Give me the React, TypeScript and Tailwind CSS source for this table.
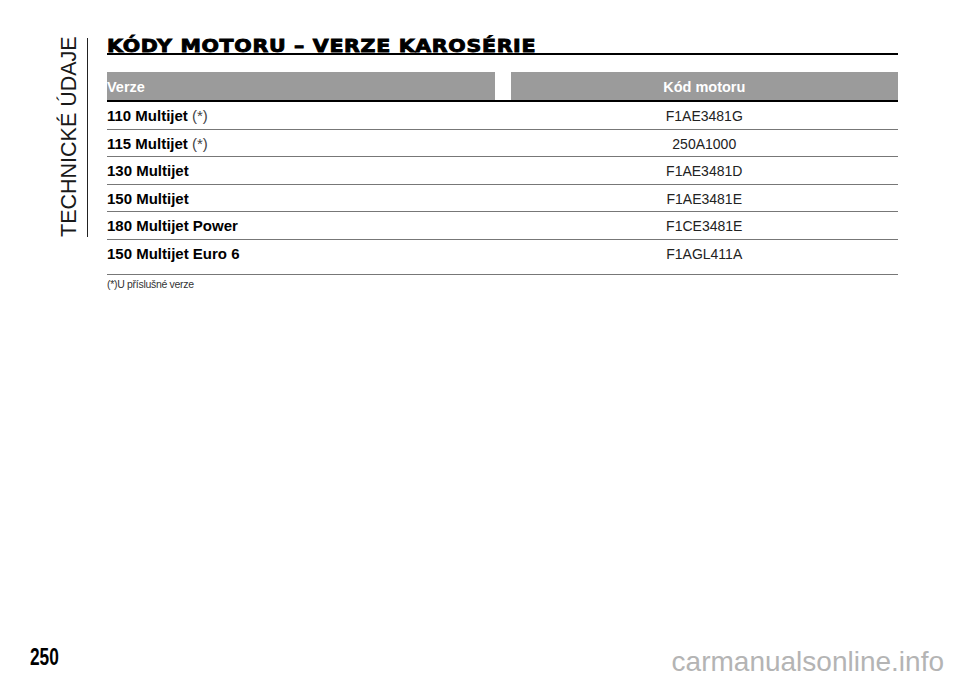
const rows: { name: string; note?: boolean; code: string }[] = [
  { name: "110 Multijet", note: true, code: "F1AE3481G" },
  { name: "115 Multijet", note: true, code: "250A1000" },
  { name: "130 Multijet", code: "F1AE3481D" },
  { name: "150 Multijet", code: "F1AE3481E" },
  { name: "180 Multijet Power", code: "F1CE3481E" },
  { name: "150 Multijet Euro 6", code: "F1AGL411A" },
];

const sans = { fontFamily: '"Liberation Sans", Arial, sans-serif' };

export default function App() {
  return (
    <div
      className="relative w-[960px] h-[686px] bg-white text-black overflow-hidden flex flex-col"
      style={sans}
    >
      <div className="flex pt-[38px] pl-[58px]">
        {/* side tab */}
        <div className="flex items-stretch gap-[7px] h-[199px]">
          <div
            className="text-[21.5px] leading-[22px] text-[#1a1a1a] rotate-180 text-right whitespace-nowrap"
            style={{ writingMode: "vertical-rl" }}
          >
            TECHNICKÉ ÚDAJE
          </div>
          <div className="w-px bg-[#222]" />
        </div>

        {/* main */}
        <div className="ml-[19px] w-[791px]">
          <h1
            className="border-b-2 border-black text-[18px] leading-[15px] font-bold text-black whitespace-nowrap"
            style={{ fontFamily: '"DejaVu Sans", Verdana, sans-serif' }}
          >
            <span className="inline-block origin-left scale-x-[1.14] tracking-[0.6px] [-webkit-text-stroke:0.9px_black]">
              KÓDY MOTORU – VERZE KAROSÉRIE
            </span>
          </h1>

          <div className="mt-[17px]">
            <div className="grid grid-cols-2 gap-x-4 border-b-2 border-black">
              <div className="h-[28px] bg-[#9b9b9b] flex items-center text-white font-bold text-[14.5px] pt-[3px]">
                Verze
              </div>
              <div className="h-[28px] bg-[#9b9b9b] flex items-center justify-center text-white font-bold text-[14.5px] pt-[3px]">
                Kód motoru
              </div>
            </div>

            {rows.map((r, i) => (
              <div
                key={r.code}
                className={`grid grid-cols-2 gap-x-4 border-b border-[#777] items-baseline pt-[5px] ${
                  i === rows.length - 1 ? "h-[35px]" : "h-[27.5px]"
                }`}
              >
                <div className="text-[15px] leading-[17px]">
                  <span className="font-bold">{r.name}</span>
                  {r.note && <span className="text-[#444]"> (*)</span>}
                </div>
                <div className="text-center text-[14px] leading-[17px] text-[#222]">
                  {r.code}
                </div>
              </div>
            ))}

            <p className="mt-[3px] text-[10.5px] leading-[12px] text-[#333] tracking-[-0.3px]">
              (*)U příslušné verze
            </p>
          </div>
        </div>
      </div>

      <div className="mt-auto pl-[30px] pb-[14px]">
        <span className="inline-block origin-left scale-x-[0.72] text-[24px] leading-none font-bold">
          250
        </span>
      </div>

      <div className="absolute right-[16px] bottom-[10px] text-[28px] leading-none text-[#b4b4b4]">
        carmanualsonline.info
      </div>
    </div>
  );
}
